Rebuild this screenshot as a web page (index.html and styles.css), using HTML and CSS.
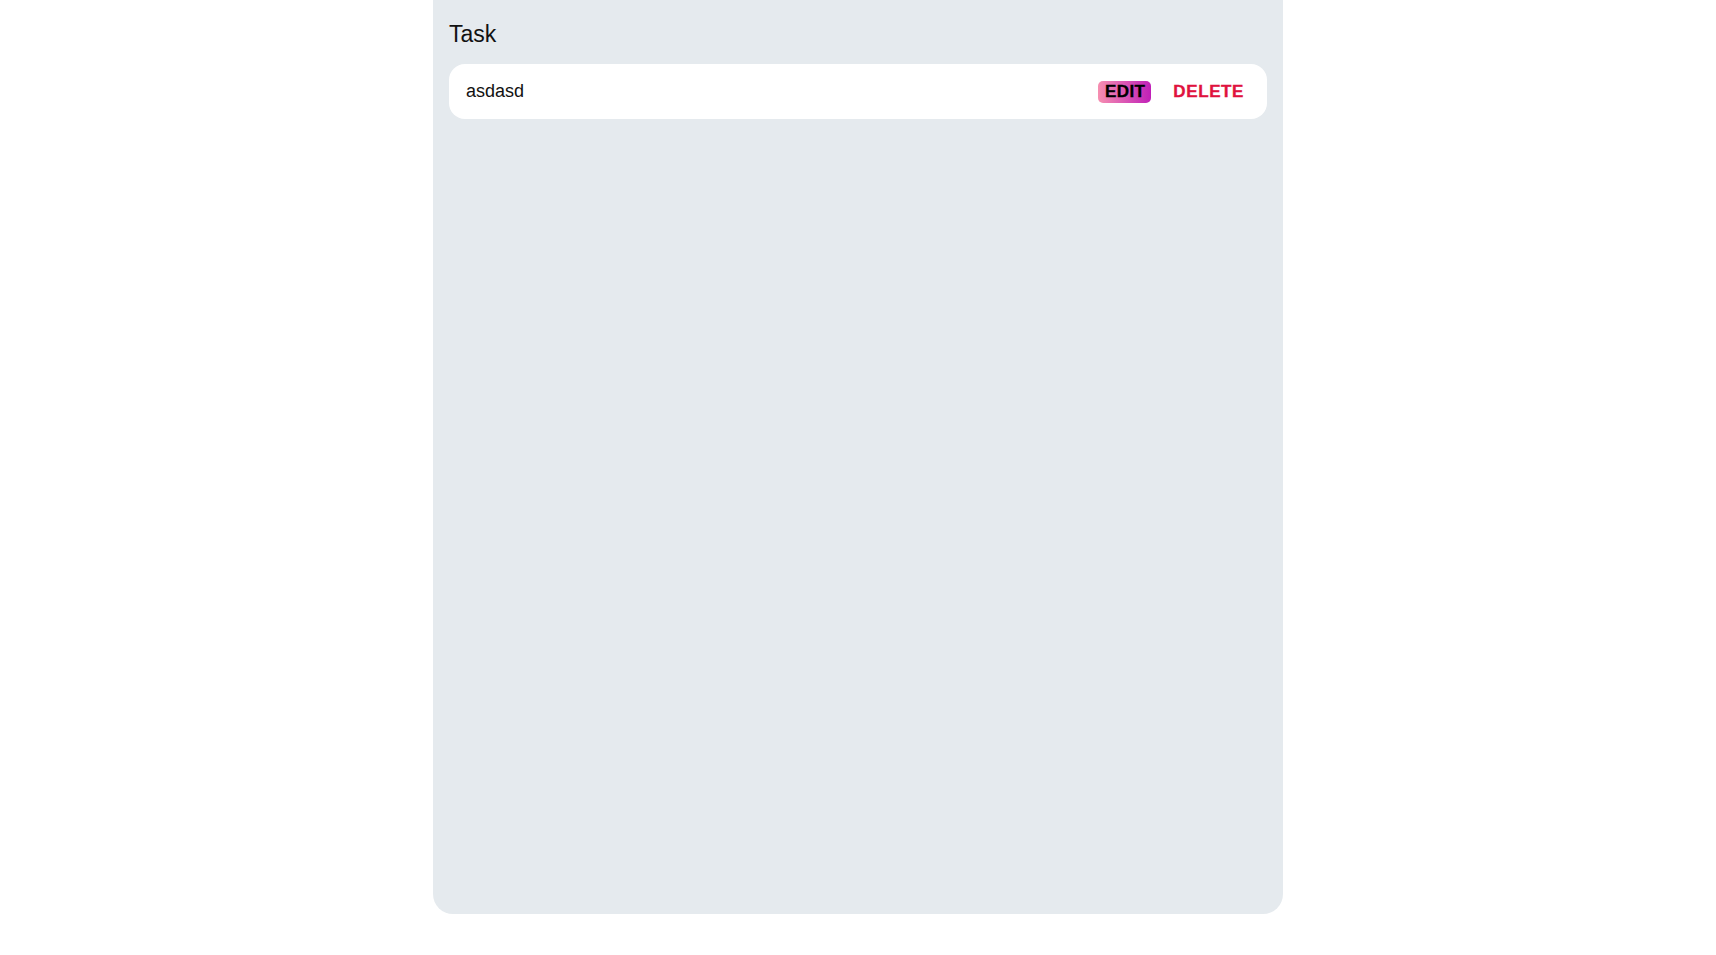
FILE: index.html
```html
<!DOCTYPE html>
<html lang="en">
<head>
<meta charset="utf-8">
<title>Task</title>
<link rel="stylesheet" href="styles.css">
</head>
<body>
<main class="panel">
  <h1 class="title">Task</h1>
  <ul class="tasks">
    <li class="task">
      <span class="task-name">asdasd</span>
      <div class="actions">
        <button class="btn btn-edit">EDIT</button>
        <button class="btn btn-delete">DELETE</button>
      </div>
    </li>
  </ul>
</main>
</body>
</html>
```
FILE: styles.css
```css
html, body {
  margin: 0;
  padding: 0;
  background: #ffffff;
}
body {
  font-family: "Liberation Sans", Arial, sans-serif;
  color: #111111;
}
.panel {
  box-sizing: border-box;
  width: 850px;
  height: 914px;
  margin: 0 auto;
  background: #e5eaee;
  border-radius: 0 0 20px 20px;
  padding: 21px 16px 16px;
}
.title {
  margin: 0 0 17px 0;
  font-size: 23px;
  font-weight: 400;
  line-height: 1.15;
  color: #111111;
}
.tasks {
  list-style: none;
  margin: 0;
  padding: 0;
}
.task {
  display: flex;
  align-items: center;
  justify-content: space-between;
  height: 55px;
  box-sizing: border-box;
  background: #ffffff;
  border-radius: 16px;
  padding: 0 17px 0 17px;
}
.task-name {
  font-size: 18px;
  color: #111111;
}
.actions {
  display: flex;
  align-items: center;
  gap: 16px;
}
.btn {
  border: 0;
  background: transparent;
  font-family: "Liberation Sans", Arial, sans-serif;
  font-size: 17px;
  font-weight: 700;
  letter-spacing: 0.6px;
  padding: 0 6px;
  height: 22px;
  line-height: 22px;
  cursor: pointer;
  -webkit-text-stroke: 0.35px currentColor;
}
.btn-edit {
  color: #000000;
  letter-spacing: 0.4px;
  padding: 0 6px 0 7px;
  border-radius: 5px;
  background: linear-gradient(90deg, #f68fb0 0%, #c01fb8 100%);
}
.btn-delete {
  color: #e0123e;
}
```
